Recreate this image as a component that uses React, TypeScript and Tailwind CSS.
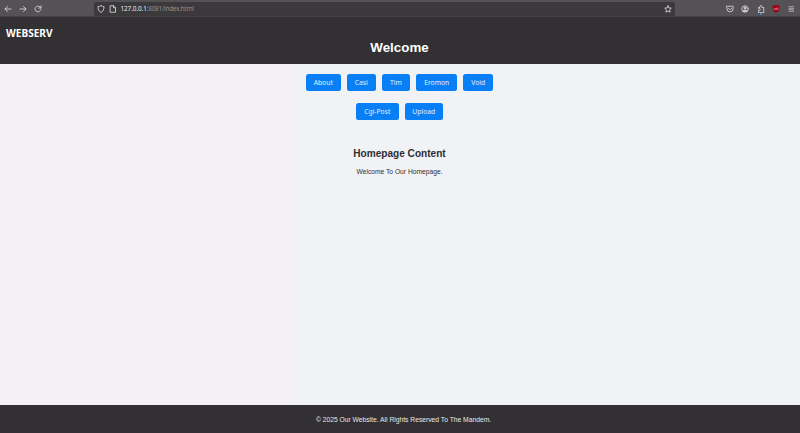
import type { ReactNode } from "react";

function Icon({ children, className = "" }: { children: ReactNode; className?: string }) {
  return (
    <svg
      viewBox="0 0 16 16"
      fill="none"
      stroke="currentColor"
      strokeWidth="1.8"
      strokeLinecap="round"
      strokeLinejoin="round"
      className={`h-2 w-2 shrink-0 ${className}`}
    >
      {children}
    </svg>
  );
}

function BrowserBar() {
  return (
    <div className="flex h-[17px] shrink-0 items-center border-b border-[#444245] bg-[#545254] pt-px text-[#d2d0d3]">
      <div className="flex w-[94px] items-center gap-[7px] pl-1">
        <Icon><path d="M14 8H2M7 3L2 8l5 5" /></Icon>
        <Icon><path d="M2 8h12M9 3l5 5-5 5" /></Icon>
        <Icon><path d="M13.5 9A5.7 5.7 0 1 1 12 4l2 2M14 1.5V6H9.5" /></Icon>
      </div>
      <div className="flex h-[14px] w-[581px] items-center rounded-[2px] bg-[#3b393b] pr-[3px] pl-[3px]">
        <Icon><path d="M8 1.2c2 1.5 3.8 1.9 6 1.9 0 5.4-1.3 9.3-6 11.7C3.3 12.4 2 8.5 2 3.1c2.2 0 4-.4 6-1.9z" /></Icon>
        <Icon className="ml-1"><path d="M3 1.5h6l4 4v9H3zM9 1.5v4h4" /></Icon>
        <span className="ml-[3.5px] font-['Noto_Sans',sans-serif] text-[6.3px] leading-[14px] tracking-[-0.18px] text-[#929093]">
          <span className="tracking-[-0.05px] text-[#eeedef]">127.0.0.1</span>:8081/index.html
        </span>
        <Icon className="ml-auto"><path d="M8 1.5l2 4.300 4.700.6-3.500 3.200.9 4.700L8 12l-4.100 2.300.9-4.700L1.300 6.400 6 5.800z" /></Icon>
      </div>
      <div className="ml-auto flex items-center gap-[7.2px] pr-[5px]">
        <Icon><path d="M1.800 2.500h12.400v5a6.200 6.200 0 0 1-12.400 0zM5 6.500l3 3 3-3" /></Icon>
        <Icon>
          <circle cx="8" cy="8" r="6.5" />
          <circle cx="8" cy="6" r="2" fill="currentColor" />
          <path d="M4 12c1-3 7-3 8 0z" fill="currentColor" />
        </Icon>
        <div className="relative h-2 w-2">
          <Icon><path d="M3 14.500v-4h2a1.600 1.600 0 0 0 0-3.200H3V5h3V3a2 2 0 0 1 4 0v2h3.500v9.500z" /></Icon>
          <span className="absolute top-[8px] left-[3px] h-[2px] w-[2px] bg-[#3584e4]" />
        </div>
        <svg viewBox="0 0 16 16" className="h-2 w-2 shrink-0">
          <path d="M8 0c2 1 4 1.500 7 1.500 0 7-1 11.500-7 14C2 13 1 8.500 1 1.500 4 1.500 6 1 8 0z" fill="#a00012" />
          <path d="M4 6v3h3V6M9 6h3v3H9z" fill="none" stroke="#eed7da" strokeWidth="0.8" />
        </svg>
        <svg viewBox="0 0 8 8" className="h-2 w-2 shrink-0" fill="currentColor">
          <path d="M1.500 1.500h5.500v.8H1.500zM1.500 3.600h5.500v.8H1.500zM1.500 5.700h5.500v.8H1.500z" />
        </svg>
      </div>
    </div>
  );
}

function NavButton({ label, size }: { label: string; size: string }) {
  return (
    <a
      className={`flex h-[17px] items-center justify-center rounded-[2.5px] bg-[#087ff5] pt-px font-['Noto_Sans',sans-serif] text-[6.75px] text-[#e3f0ff] ${size}`}
    >
      {label}
    </a>
  );
}

export default function App() {
  return (
    <div className="flex h-[433px] w-[800px] flex-col overflow-hidden bg-[#f1f2f6] font-['Liberation_Sans',Arial,sans-serif] text-[#302e31]">
      <BrowserBar />
      <header className="h-[46.5px] shrink-0 bg-[#323032] pt-[9px] text-white">
        <div className="pl-[6px] font-['Noto_Sans',sans-serif] text-[10.1px] leading-[14px] font-bold">WEBSERV</div>
        <h1 className="mt-px pr-px text-center text-[13.35px] leading-[14px] font-bold">Welcome</h1>
      </header>
      <main className="flex flex-1 flex-col items-center bg-linear-to-r from-[#f3f1f4] from-[37%] to-[#f0f2f6] to-[37.5%] pt-[10.5px]">
        <nav className="flex flex-col items-center gap-[12.3px] pr-px">
          <div className="flex gap-[6px]">
            <NavButton label="About" size="w-[35px]" />
            <NavButton label="Casi" size="w-[29px]" />
            <NavButton label="Tim" size="w-[28.5px]" />
            <NavButton label="Eromon" size="w-[41px]" />
            <NavButton label="Void" size="w-[30px]" />
          </div>
          <div className="flex gap-[6px]">
            <NavButton label="Cgi-Post" size="w-[42.5px]" />
            <NavButton label="Upload" size="w-[38.5px]" />
          </div>
        </nav>
        <h2 className="mt-[27.7px] pr-px text-[10.08px] leading-[12px] font-bold">Homepage Content</h2>
        <p className="mt-[7px] pr-px text-[6.7px] leading-[10px]">Welcome To Our Homepage.</p>
      </main>
      <footer className="flex h-[28.5px] shrink-0 items-center justify-center bg-[#323032] pt-[2px] pl-[7px] text-[6.73px] text-[#e9e8ea]">
        © 2025 Our Website. All Rights Reserved To The Mandem.
      </footer>
    </div>
  );
}
